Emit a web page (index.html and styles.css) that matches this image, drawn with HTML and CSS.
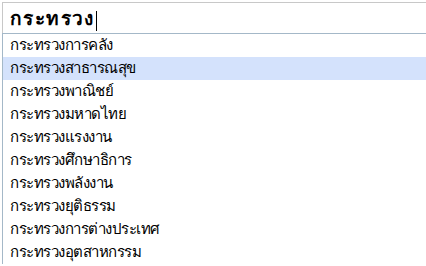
FILE: index.html
```html
<!DOCTYPE html>
<html lang="th">
<head>
    <meta charset="UTF-8">
    <title>ค้นหากระทรวง</title>
    <link rel="stylesheet" href="styles.css">
</head>
<body>
    <div class="search">
        <div class="search-box">
            <span class="query">กระทรวง</span><span class="caret"></span>
        </div>
        <ul class="suggestions">
            <li>กระทรวงการคลัง</li>
            <li class="active">กระทรวงสาธารณสุข</li>
            <li>กระทรวงพาณิชย์</li>
            <li>กระทรวงมหาดไทย</li>
            <li>กระทรวงแรงงาน</li>
            <li>กระทรวงศึกษาธิการ</li>
            <li>กระทรวงพลังงาน</li>
            <li>กระทรวงยุติธรรม</li>
            <li>กระทรวงการต่างประเทศ</li>
            <li>กระทรวงอุตสาหกรรม</li>
        </ul>
    </div>
</body>
</html>
```

FILE: styles.css
```css
body {
    margin: 0;
    padding: 2px 0 0 2px;
    background-color: #fff;
    font-family: Tahoma, "DejaVu Sans", sans-serif;
    color: #000;
    overflow: hidden;
}

.search {
    width: 440px;
}

.search-box {
    height: 30px;
    border-top: 1px solid #c8c8c8;
    border-left: 1px solid #c8c8c8;
    display: flex;
    align-items: center;
    padding-left: 7px;
}

.query {
    font-size: 19px;
    font-weight: bold;
    letter-spacing: 1.4px;
}

.caret {
    width: 1px;
    height: 20px;
    background-color: #000;
    margin-left: 1px;
    margin-top: 6px;
}

.suggestions {
    list-style: none;
    margin: 0;
    padding: 0;
    border-top: 1px solid #a4b8c8;
    border-left: 1px solid #a4b8c8;
}

.suggestions li {
    height: 23px;
    line-height: 23px;
    padding-left: 7px;
    font-size: 15px;
    letter-spacing: -0.5px;
}

.suggestions li.active {
    background-color: #d4e2fc;
}
```
